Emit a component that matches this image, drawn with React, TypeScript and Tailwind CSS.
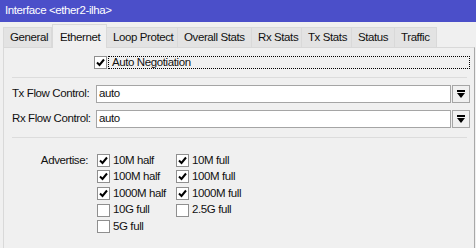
import React from "react";

const font = { fontFamily: '"Liberation Sans", Arial, sans-serif' };

const tabs = [
  { name: "General", w: "w-[49px]" },
  { name: "Ethernet", w: "w-[55px]", active: true },
  { name: "Loop Protect", w: "w-[71px]" },
  { name: "Overall Stats", w: "w-[74px]" },
  { name: "Rx Stats", w: "w-[50px]" },
  { name: "Tx Stats", w: "w-[50px]" },
  { name: "Status", w: "w-[43px]" },
  { name: "Traffic", w: "w-[42px]" },
];

function Check({ on }: { on?: boolean }) {
  return (
    <span className="flex h-[13px] w-[13px] shrink-0 items-center justify-center border border-[#8f8f8f] bg-white">
      {on && (
        <svg width="9" height="9" viewBox="0 0 9 9">
          <path d="M1 4.5 L3.5 7 L8 1.5" stroke="#000" strokeWidth="2" fill="none" />
        </svg>
      )}
    </span>
  );
}

function Select({ label, value }: { label: string; value: string }) {
  return (
    <div className="flex h-[18px] items-center">
      <span className="w-[78px] pr-[2px] text-right">{label}</span>
      <div className="ml-[6px] flex h-[18px] w-[355px] items-center border border-[#a5a5a5] bg-white pl-[2px]">
        {value}
      </div>
      <div className="ml-[1px] flex h-[18px] w-[18px] items-center justify-center border border-[#a5a5a5] bg-[#f0f0f0]">
        <svg width="8" height="9" viewBox="0 0 8 9">
          <rect x="0" y="0" width="8" height="2" fill="#000" />
          <path d="M0 3 H8 L4 8 Z" fill="#000" />
        </svg>
      </div>
    </div>
  );
}

function Opt({ label, on }: { label: string; on?: boolean }) {
  return (
    <div className="flex h-[16.6px] items-center gap-[2px]">
      <Check on={on} />
      <span className="pl-[1px]">{label}</span>
    </div>
  );
}

export default function App() {
  return (
    <div
      className="h-[248px] w-[476px] overflow-hidden whitespace-nowrap bg-[#f0f0f0] text-[11.5px] tracking-[-0.4px] text-[#111]"
      style={font}
    >
      {/* Title */}
      <div className="flex h-[22px] items-center bg-[#4b4fc9] pl-[5px] text-white">Interface &lt;ether2-ilha&gt;</div>

      {/* Tabs */}
      <div className="relative z-10 flex h-[25px] items-end pl-[3px]">
        {tabs.map((t) =>
          t.active ? (
            <div
              key={t.name}
              className={`${t.w} -mb-px flex h-[24px] items-start border border-b-0 border-[#d9d9d9] bg-[#f0f0f0] pl-[7px] pt-[4px]`}
            >
              {t.name}
            </div>
          ) : (
            <div
              key={t.name}
              className={`${t.w} flex h-[20px] items-center border border-l-0 border-b-0 border-[#d9d9d9] bg-[#e3e3e3] pl-[6px] first:border-l`}
            >
              {t.name}
            </div>
          )
        )}
      </div>

      {/* Panel */}
      <div className="ml-[3px] h-[220px] w-[472px] border border-[#d9d9d9] border-r-[#a8a8a8] bg-[#f0f0f0] pl-[8px]">
        <div className="mt-[8px] flex h-[13px] items-center">
          <span className="ml-[82px]">
            <Check on />
          </span>
          <span className="ml-[1px] flex h-[13px] w-[362px] items-center border border-dotted border-black pl-[3px]">
            Auto Negotiation
          </span>
        </div>

        <div className="mt-[8px] h-px w-[455px] bg-[#dcdcdc]" />

        <div className="mt-[7px] flex flex-col gap-[7px]">
          <Select label="Tx Flow Control:" value="auto" />
          <Select label="Rx Flow Control:" value="auto" />
        </div>

        <div className="mt-[9px] h-px w-[455px] bg-[#dcdcdc]" />

        <div className="mt-[14px] flex">
          <span className="w-[78px] pr-[2px] text-right leading-[16.6px]">Advertise:</span>
          <div className="ml-[7px] grid grid-cols-[79px_auto]">
            <Opt label="10M half" on />
            <Opt label="10M full" on />
            <Opt label="100M half" on />
            <Opt label="100M full" on />
            <Opt label="1000M half" on />
            <Opt label="1000M full" on />
            <Opt label="10G full" />
            <Opt label="2.5G full" />
            <Opt label="5G full" />
          </div>
        </div>
      </div>
    </div>
  );
}
